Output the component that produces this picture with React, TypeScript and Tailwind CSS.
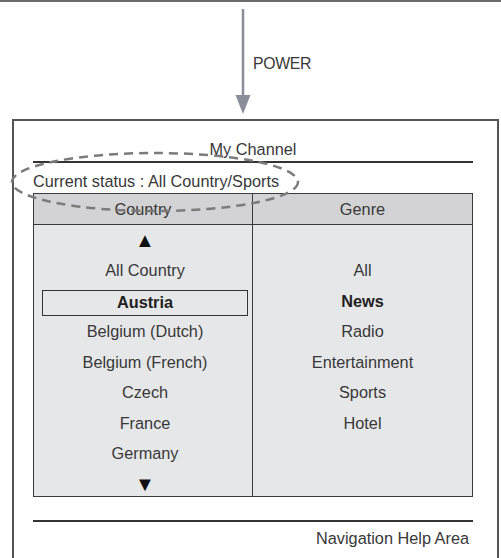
import * as React from "react";

/** "My Channel" screen diagram — POWER arrow into a TV menu mock with a
 *  country / genre list and a dashed callout round the status line. */

const countries = [
  "All Country",
  "Austria",
  "Belgium (Dutch)",
  "Belgium (French)",
  "Czech",
  "France",
  "Germany",
];

const genres = ["All", "News", "Radio", "Entertainment", "Sports", "Hotel"];

const selectedCountry = "Austria";
const selectedGenre = "News";

function Row({ children }: { children?: React.ReactNode }) {
  return <div className="h-[30.5px] flex items-center justify-center">{children}</div>;
}

function PowerArrow() {
  return (
    <svg width="16" height="106" viewBox="0 0 16 106" className="block">
      <line x1="8" y1="0" x2="8" y2="88" stroke="#8a8e99" strokeWidth="2.5" />
      <polygon points="0.5,86 15.5,86 8,105" fill="#8a8e99" />
    </svg>
  );
}

function StatusCallout() {
  return (
    <svg
      className="absolute left-0 top-0 pointer-events-none"
      width="501"
      height="558"
      viewBox="0 0 501 558"
    >
      <ellipse
        cx="155"
        cy="182"
        rx="143"
        ry="29"
        fill="none"
        stroke="#7b7b7b"
        strokeWidth="2.5"
        strokeDasharray="9 6"
      />
    </svg>
  );
}

export default function App() {
  return (
    <div
      className="relative w-[501px] h-[558px] overflow-hidden bg-white text-[#383838] text-[16.3px] leading-[19px]"
      style={{ fontFamily: '"Liberation Sans", Arial, sans-serif' }}
    >
      <div className="h-[2px] bg-[#6a6a6a]" />

      <div className="h-[117px] flex">
        <div className="ml-[235px] mt-[7px]">
          <PowerArrow />
        </div>
        <div className="ml-[2px] mt-[52px] text-[15.8px] tracking-[-0.3px]">POWER</div>
      </div>

      <div className="ml-[12px] w-[487px] h-[450px] border-2 border-b-0 border-[#555] pl-[19px] pr-[24px]">
        <div className="pt-[19px] pb-[2px] text-center">My Channel</div>
        <div className="h-[2px] bg-[#333]" />
        <div className="pt-[9px] pb-[2px]">Current status : All Country/Sports</div>

        <div className="border-[1.5px] border-[#3a3a3a] grid grid-cols-2">
          <div className="h-[31px] flex items-center justify-center bg-[#d3d3d5] border-b-[1.5px] border-r-[1.5px] border-[#3a3a3a]">
            Country
          </div>
          <div className="h-[31px] flex items-center justify-center bg-[#d3d3d5] border-b-[1.5px] border-[#3a3a3a]">
            Genre
          </div>

          <div className="h-[271px] bg-[#e6e7e9] border-r-[1.5px] border-[#3a3a3a] pl-[8px] pr-[4px]">
            <Row>
              <span className="text-[20px] text-[#111]">▲</span>
            </Row>
            {countries.map((c) =>
              c === selectedCountry ? (
                <div key={c} className="h-[30.5px] flex items-center">
                  <div className="w-full h-[26px] mt-[3px] border-[1.5px] border-[#333] flex items-center justify-center font-bold text-[#222]">
                    {c}
                  </div>
                </div>
              ) : (
                <Row key={c}>{c}</Row>
              ),
            )}
            <Row>
              <span className="text-[20px] text-[#111]">▼</span>
            </Row>
          </div>

          <div className="h-[271px] bg-[#e6e7e9]">
            <Row />
            {genres.map((g) => (
              <Row key={g}>
                <span className={g === selectedGenre ? "font-bold text-[#222]" : ""}>{g}</span>
              </Row>
            ))}
          </div>
        </div>

        <div className="mt-[23px] h-[2px] bg-[#333]" />
        <div className="mt-[7px] pr-[4px] text-right">Navigation Help Area</div>
      </div>

      <StatusCallout />
    </div>
  );
}
